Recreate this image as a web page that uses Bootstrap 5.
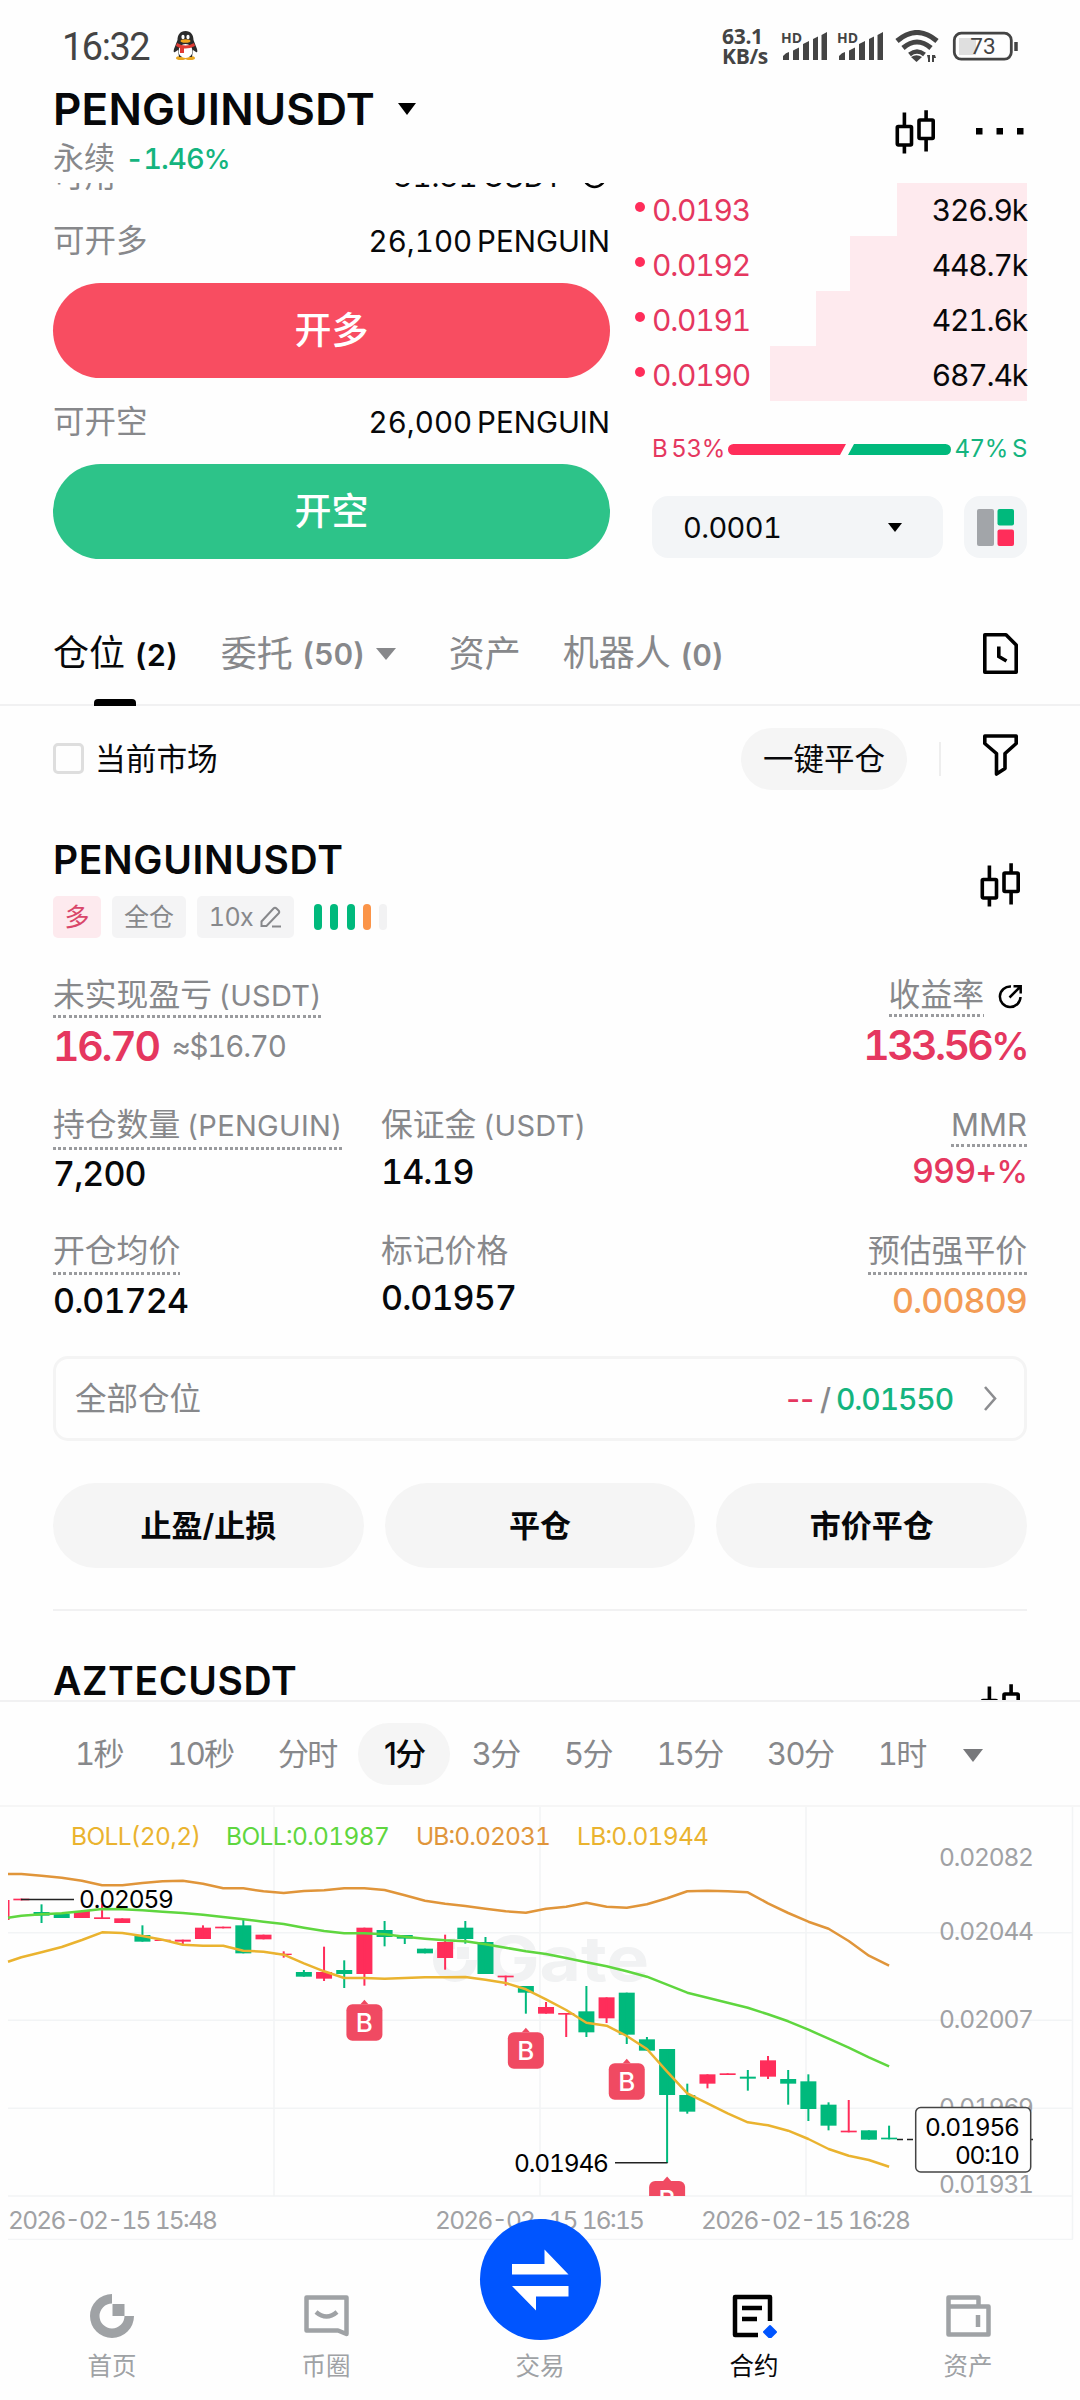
<!DOCTYPE html>
<html lang="zh-CN">
<head>
<meta charset="utf-8">
<meta name="viewport" content="width=device-width, initial-scale=1">
<title>PENGUINUSDT 永续</title>
<link rel="stylesheet" href="https://cdn.jsdelivr.net/npm/bootstrap@5.3.0/dist/css/bootstrap.min.css">
<style>
:root{--up:#00b97c;--down:#ff2d5a;--ink:#07080a;--dim:#87888b;--soft:#f5f5f5;--rule:#f1f1f2}
html,body{background:#fefefe}
body{width:1080px;height:2400px;overflow:hidden;font-family:Inter,"Noto Sans CJK SC",sans-serif;font-variant-numeric:tabular-nums;color:var(--ink);font-size:31.5px;line-height:40px}
svg{display:block;flex:none}
.ink{color:var(--ink)!important}.dim{color:var(--dim)}.grn{color:#14b47e}.redtx{color:#e5375f}.orgtx{color:#f39c55}
.pagepad{padding-left:53px;padding-right:53px}
.statusbar{height:84px;padding:7px 60px 0 62px;color:#444;font-family:Roboto,sans-serif}
.clock{font-size:38px;letter-spacing:-1.5px;margin-right:24px;padding-top:2px}
.netspeed{font:700 21px/20px "Open Sans",sans-serif;width:58px;letter-spacing:-.3px;padding-top:1px}
.tophead{height:99px;padding-right:53px}
.pairname{font-size:44px;font-weight:600;line-height:50px;letter-spacing:.2px}
.subline{font-size:31px;line-height:40px;margin-top:4px}
.subline .grn{font-size:29px;letter-spacing:-.9px;margin-left:2px}
.tradezone{height:406px;overflow:hidden}
.ticket{width:557px}
.avail{height:42px;margin-top:-28px}
.lineitem{height:42px}
.numtx{font-size:29.5px;letter-spacing:0;word-spacing:-3px}
.bigbtn{height:95px;border-radius:48px;color:#fff;font-size:37px;font-weight:500;width:100%;border:0}
.longbtn{background:#f84d61}.shortbtn{background:#2dc389}
.depth{width:392px}
.depthrow{height:55px;padding-top:3px;font-size:30px;letter-spacing:-1.2px}
.depthrow:first-child{margin-top:-2px}
.depthrow .fillbar{right:0;top:0;height:100%;background:#feeaee}
.depthrow .pt{width:10px;height:10px;border-radius:50%;background:var(--down);margin-right:7px;margin-top:-6px}
.sharebar{font-size:24px;height:30px;margin-top:33px;padding-left:17px;word-spacing:-2px;letter-spacing:-.4px}
.pickbox{height:62px;border-radius:16px;background:#f3f5f7}
.tabstrip{height:117px;border-bottom:2px solid var(--rule);padding-top:14px;font-size:36px;line-height:50px}
.cnt{font-size:30.5px;font-weight:600;letter-spacing:-.2px}
.tabstrip .on::after{content:"";position:absolute;left:40.5px;bottom:-26px;width:42px;height:7px;border-radius:4px 4px 0 0;background:#000}
.filterbar{height:105px}
.tick{width:31px;height:31px;border:3px solid #dedede;border-radius:5px}
.pill{background:var(--soft);border-radius:60px;border:0;color:var(--ink)}
.coin{font-size:39px;font-weight:600;line-height:46px;letter-spacing:.65px}
.tagbox{height:42px;border-radius:5px;background:#f4f4f5;color:var(--dim);font-size:25px}
.lv i{display:block;width:8px;height:26px;border-radius:4px;background:var(--up)}
.dotted{background:repeating-linear-gradient(90deg,#9a9b9e 0 3px,transparent 3px 5.2px) left bottom/100% 3px no-repeat;padding-bottom:2px}
.lab{font-size:31.8px;line-height:40px;color:var(--dim);word-spacing:-2px}
.lt{font-size:29px;letter-spacing:.3px}
.val{font-size:34px;line-height:40px;font-weight:500;letter-spacing:-.9px}
.bigval{font-size:41px;line-height:46px;font-weight:600;letter-spacing:-2.3px}
.pct{font-size:.93em}
.stopbox{height:85px;border:3px solid #f4f4f4;border-radius:15px;padding:0 24px 0 19px}
.stopnum{font-size:30px;word-spacing:-1px;letter-spacing:-1.1px}
.actbtn{height:85px;font-size:31px;font-weight:600}
.frames{height:107px;border-top:2px solid var(--rule);border-bottom:2px solid #f6f6f6;padding-left:75px;color:var(--dim);font-size:31px;letter-spacing:-1.7px}
.frames .pill{width:92px;height:62px;margin:0 -23px;letter-spacing:inherit}
.chartbox{height:433px}
.navbar-foot{height:160px}
.navcell{width:214px;font-size:24.5px;line-height:34px;color:#9fa2a5;padding-bottom:17px}
.navcell svg{margin-bottom:11px}
.swap{left:480px;top:-21px;width:121px;height:121px;border-radius:50%;background:#0055ff;z-index:3}
</style>
</head>
<body>
<svg width="0" height="0" class="position-absolute"><defs>
<symbol id="kline" viewBox="0 0 40 44"><g fill="none" stroke="#000" stroke-width="3.6"><rect x="2.3" y="16.500" width="14.200" height="18.500" rx="1"/><rect x="24" y="10" width="14.200" height="18.500" rx="1"/><path d="M9.400 2.500V16M9.400 35V43.500M31.100 .2V10M31.100 28V41.500"/></g></symbol>
<symbol id="bars" viewBox="0 0 46 29"><path d="M0 28V24Q3 20.500 6 20V28ZM10 28V18.500L16 15.500V28ZM20 28V12L26 9V28ZM30 28V7L35 4.500V28ZM38.500 28V3L44 0V28Z" fill="#444"/></symbol>
</defs></svg>

<header class="statusbar d-flex align-items-center">
  <span class="clock">16:32</span>
  <svg width="25" height="29" viewBox="0 0 25 29"><ellipse cx="8" cy="27" rx="5" ry="2" fill="#e8a51d"/><ellipse cx="17" cy="27" rx="5" ry="2" fill="#e8a51d"/><path d="M12.500 0C7 0 4.500 4 4.500 9L1 18q-1 4 1 3l3-2 1 7h13l1-7 3 2q2 1 1-3L20.500 9C20.500 4 18 0 12.500 0Z" fill="#2b2b2b"/><ellipse cx="12.500" cy="20" rx="7" ry="7" fill="#fff"/><ellipse cx="10" cy="6" rx="1.600" ry="2.300" fill="#fff"/><ellipse cx="15" cy="6" rx="1.600" ry="2.300" fill="#fff"/><ellipse cx="12.500" cy="10" rx="5" ry="1.800" fill="#f2a31c"/><path d="M4 12q8.500 5 17 0l1 3q-6 3-11 2.500V22H7v-5l-4-2Z" fill="#e03b33"/></svg>
  <div class="ms-auto d-flex align-items-center">
    <div class="netspeed text-start">63.1<br>KB/s</div>
    <svg width="172" height="32" viewBox="780 30 172 32">
      <g font-family="Open Sans, sans-serif" font-weight="700" font-size="14" fill="#444"><text x="781" y="42.500" textLength="21">HD</text><text x="837" y="42.500" textLength="21">HD</text></g>
      <use href="#bars" x="783" y="32" width="46" height="29"/><use href="#bars" x="839" y="32" width="46" height="29"/>
      <g fill="none" stroke="#444" stroke-width="5"><path d="M897 41Q917 24 937 41"/><path d="M903 48Q917 36 931 48"/><path d="M909.500 54.500Q917 48.500 924.500 54.500" stroke-width="4.500"/></g><path d="M911 57Q916.500 53.500 922 57L916.500 62Z" fill="#444"/><path d="M927 55h3v7h-2v-3ZM932 55h3l1 3h-2v4h-2Z" fill="#444"/>
    </svg>
    <svg width="68" height="30" viewBox="952 30 68 30"><rect x="959" y="37" width="17" height="17" fill="#dfdfdf"/><rect x="954.300" y="32.200" width="57" height="26" rx="7" fill="none" stroke="#444" stroke-width="2.800"/><path d="M1016 41v9" stroke="#444" stroke-width="3.500"/><text x="983" y="53" text-anchor="middle" font-family="Roboto, sans-serif" font-size="22.500" fill="#444">73</text></svg>
  </div>
</header>

<section class="tophead pagepad d-flex">
  <div>
    <div class="d-flex align-items-center"><span class="pairname">PENGUINUSDT</span><svg style="margin-left:22px" width="20" height="12" viewBox="0 0 20 12"><path d="M1 0H19L10 12Z"/></svg></div>
    <div class="subline"><span class="dim">永续</span> <span class="grn fw-medium">-1.46<span class="pct">%</span></span></div>
  </div>
  <div class="ms-auto d-flex align-items-center" style="margin-top:-4px">
    <svg width="40" height="44" style="margin-right:41px"><use href="#kline"/></svg>
    <svg width="48" height="7" style="margin-right:3px"><path d="M0 0h6.500v6.500H0zM20.500 0h6.500v6.500h-6.500zM41 0h6.500v6.500h-6.500z"/></svg>
  </div>
</section>

<section class="tradezone pagepad d-flex justify-content-between">
  <div class="ticket">
    <div class="avail d-flex justify-content-between align-items-center"><span class="dim">可用</span><span class="numtx d-flex align-items-center">31.31 USDT<svg style="margin:0 3px 0 19px" width="25" height="25"><circle cx="12.500" cy="12.500" r="10.500" fill="none" stroke="#000" stroke-width="2.500"/></svg></span></div>
    <div class="lineitem d-flex justify-content-between align-items-center" style="margin-top:23px"><span class="dim">可开多</span><span class="numtx">26,100 PENGUIN</span></div>
    <button class="bigbtn longbtn" style="margin-top:21px">开多</button>
    <div class="lineitem d-flex justify-content-between align-items-center" style="margin-top:23px"><span class="dim">可开空</span><span class="numtx">26,000 PENGUIN</span></div>
    <button class="bigbtn shortbtn" style="margin-top:21px">开空</button>
  </div>
  <div class="depth">
    <div>
      <div class="depthrow position-relative d-flex align-items-center"><span class="fillbar position-absolute" style="width:130px"></span><span class="pt"></span><span class="redtx">0.0193</span><span class="ms-auto position-relative">326.9k</span></div>
      <div class="depthrow position-relative d-flex align-items-center"><span class="fillbar position-absolute" style="width:177px"></span><span class="pt"></span><span class="redtx">0.0192</span><span class="ms-auto position-relative">448.7k</span></div>
      <div class="depthrow position-relative d-flex align-items-center"><span class="fillbar position-absolute" style="width:211px"></span><span class="pt"></span><span class="redtx">0.0191</span><span class="ms-auto position-relative">421.6k</span></div>
      <div class="depthrow position-relative d-flex align-items-center"><span class="fillbar position-absolute" style="width:257px"></span><span class="pt"></span><span class="redtx">0.0190</span><span class="ms-auto position-relative">687.4k</span></div>
    </div>
    <div class="sharebar d-flex align-items-center justify-content-between"><span class="redtx">B 53%</span><svg width="223" height="11"><path d="M5.500 0H118L112 11H5.500A5.500 5.500 0 0 1 5.500 0Z" fill="#ff2d5a"/><path d="M126 0H217.500a5.500 5.500 0 0 1 0 11H120Z" fill="#00b97c"/></svg><span class="grn">47% S</span></div>
    <div class="d-flex justify-content-between" style="padding-left:17px;margin-top:32px">
      <div class="pickbox d-flex align-items-center justify-content-between" style="width:291px;padding:1px 41px 0 31px;font-size:29px;letter-spacing:-.6px"><span>0.0001</span><svg width="14" height="9"><path d="M0 0H14L7 9Z"/></svg></div>
      <div class="pickbox d-flex align-items-center justify-content-center" style="width:63px"><svg width="37" height="37"><rect width="17" height="37" rx="2" fill="#a2a5a9"/><rect x="20.500" width="16.500" height="16.500" rx="2" fill="#00b97c"/><rect x="20.500" y="20.500" width="16.500" height="16.500" rx="2" fill="#ff2d5a"/></svg></div>
    </div>
  </div>
</section>

<nav class="tabstrip pagepad d-flex align-items-center">
  <span class="on position-relative">仓位 <span class="cnt">(2)</span></span>
  <span class="dim d-flex align-items-center" style="margin-left:43px">委托&nbsp;<span class="cnt">(50)</span><svg style="margin-left:11px" width="20" height="12"><path d="M0 0H20L10 12Z" fill="#87888b"/></svg></span>
  <span class="dim" style="margin-left:53px">资产</span>
  <span class="dim" style="margin-left:42px">机器人 <span class="cnt">(0)</span></span>
  <svg class="ms-auto" style="margin-right:9px" width="35" height="41" viewBox="0 0 35 41"><path d="M1.800 1.800H23L33.200 12V39.200H1.800Z" fill="none" stroke="#000" stroke-width="3.600" stroke-linejoin="round"/><path d="M15.800 13.500V23.500L23.500 28" fill="none" stroke="#000" stroke-width="3.600"/></svg>
</nav>

<div class="filterbar pagepad d-flex align-items-center">
  <span class="tick"></span><span style="margin-left:11px;font-size:30.700px">当前市场</span>
  <button class="pill ms-auto" style="width:166px;height:62px;font-size:30.500px;padding:0">一键平仓</button>
  <span style="width:2px;height:34px;background:#eee;margin:0 42px 0 32px"></span>
  <svg style="margin:-8px 9px 0 0" width="35" height="42" viewBox="0 0 35 42"><path d="M1.800 2H33.200V9.500L22 19.500V34.500L13.500 40V19.500L1.800 9.500Z" fill="none" stroke="#000" stroke-width="3.600" stroke-linejoin="round"/></svg>
</div>

<main class="pagepad" style="height:889px;overflow:hidden;padding-top:26px">
  <div class="d-flex justify-content-between">
    <div>
      <div class="coin">PENGUINUSDT</div>
      <div class="d-flex align-items-center" style="margin-top:13px">
        <span class="tagbox d-flex align-items-center justify-content-center" style="width:48px;background:#fdeaee;color:#d9466a">多</span>
        <span class="tagbox d-flex align-items-center justify-content-center" style="width:74px;margin-left:11px">全仓</span>
        <span class="tagbox d-flex align-items-center justify-content-center" style="width:97px;margin-left:11px;letter-spacing:-.6px">10x<svg style="margin-left:7px" width="22" height="22" viewBox="0 0 22 22"><path d="M1.500 20V15.500L13.500 2.500Q15 1 16.500 2.500L18.500 4.500Q20 6 18.500 7.500L6.500 20ZM12 20.500H21" fill="none" stroke="#87888b" stroke-width="2"/></svg></span>
        <span class="lv d-flex" style="gap:8.300px;margin-left:20px"><i></i><i></i><i></i><i style="background:#fb9448"></i><i style="background:#f2f2f3"></i></span>
      </div>
    </div>
    <svg style="margin:26px 7px 0 0" width="40" height="44"><use href="#kline"/></svg>
  </div>

  <div class="d-flex justify-content-between" style="margin-top:37px">
    <div><span class="lab dotted d-inline-block">未实现盈亏 <span class="lt">(USDT)</span></span>
      <div class="d-flex align-items-center" style="margin-top:5px"><span class="bigval redtx">16.70</span><span class="dim" style="font-size:29.500px;margin-left:13px;letter-spacing:-1.200px">≈$16.70</span></div></div>
    <div class="text-end"><div class="d-flex justify-content-end align-items-center"><span class="lab dotted">收益率</span><svg style="margin:0 4px 0 14px" width="25" height="25" viewBox="0 0 25 25"><path d="M13 2.500A10.300 10.300 0 1 0 22.500 13M11.500 13.500 22 3M15.500 2.200H22.700V9.500" fill="none" stroke="#000" stroke-width="2.500"/></svg></div>
      <div class="bigval redtx" style="margin-top:5px;letter-spacing:-2.600px">133.56<span class="pct">%</span></div></div>
  </div>

  <div class="d-flex" style="margin-top:36px">
    <div style="width:328px"><span class="lab dotted d-inline-block" style="padding-bottom:4px">持仓数量 <span class="lt">(PENGUIN)</span></span><div class="val" style="margin-top:4px">7,200</div></div>
    <div><div class="lab">保证金 <span class="lt">(USDT)</span></div><div class="val" style="margin-top:6px">14.19</div></div>
    <div class="ms-auto text-end"><span class="lab dotted d-inline-block" style="font-size:31px">MMR</span><div class="val redtx" style="margin-top:4px">999+<span class="pct">%</span></div></div>
  </div>
  <div class="d-flex" style="margin-top:37px">
    <div style="width:328px"><span class="lab dotted d-inline-block" style="padding-bottom:4px">开仓均价</span><div class="val" style="margin-top:6px">0.01724</div></div>
    <div><div class="lab">标记价格</div><div class="val" style="margin-top:7px">0.01957</div></div>
    <div class="ms-auto text-end"><span class="lab dotted d-inline-block" style="padding-bottom:4px">预估强平价</span><div class="val orgtx" style="margin-top:6px">0.00809</div></div>
  </div>

  <div class="stopbox d-flex align-items-center" style="margin-top:35px"><span class="dim">全部仓位</span><span class="stopnum ms-auto fw-medium"><span class="redtx" style="font-variant-numeric:normal;letter-spacing:0">--</span> <span class="dim">/</span> <span class="grn">0.01550</span></span><svg style="margin-left:30px;margin-right:3px" width="14" height="25"><path d="M2 1 12 12.500 2 24" fill="none" stroke="#8c8d90" stroke-width="2.600"/></svg></div>
  <div class="d-flex" style="gap:21px;margin-top:42px"><button class="pill actbtn flex-fill w-100">止盈/止损</button><button class="pill actbtn flex-fill w-100">平仓</button><button class="pill actbtn flex-fill w-100">市价平仓</button></div>
  <div style="height:2px;background:var(--rule);margin-top:41px"></div>
  <div class="d-flex justify-content-between" style="margin-top:47px"><div class="coin">AZTECUSDT</div><svg style="margin:26px 7px 0 0" width="40" height="44"><use href="#kline"/></svg></div>
</main>

<div class="frames d-flex align-items-center" style="gap:44.600px">
  <span>1秒</span><span>10秒</span><span>分时</span><button class="pill p-0 fw-medium">1分</button><span>3分</span><span>5分</span><span>15分</span><span>30分</span><span>1时</span><svg style="margin-left:-7px;margin-top:4px" width="20" height="13"><path d="M0 0H20L10 13Z" fill="#77787b"/></svg>
</div>

<svg class="chartbox" id="chart" width="1080" height="433" viewBox="0 17 1080 433" font-family="Inter, sans-serif" font-size="24.500">
  <g stroke="#f2f4f5" stroke-width="1.500"><path d="M8 142.700H1073M8 230.300H1073M8 318.300H1073M8 406H1073M8 449.500H1073M274 17V406M540 17V406M806 17V406M1072.500 17V449"/></g>
  <g fill="#f1f2f3"><path d="M455 148a22 22 0 1 0 22 22h-11a11 11 0 1 1-11-11Z"/><path d="M457 157h12v12h-12z"/><text x="486" y="191" font-size="62" font-weight="700" textLength="163" lengthAdjust="spacingAndGlyphs">Gate</text></g>
  <g id="candles"></g>
  <g id="bands" fill="none" stroke-width="2.500" stroke-linejoin="round"></g>
  <g stroke="#222" stroke-width="1.400"><path d="M21 109.500H74M615 372.700H667.500"/><path d="M897 349.500H915M1029 349.500h4" stroke-dasharray="6 4"/></g>
  <g fill="#000"><text x="79" y="118" textLength="95">0.02059</text><text x="514" y="382" textLength="95">0.01946</text></g>
  <text x="71" y="54.500" fill="#eab32f" textLength="130">BOLL(20,2)</text><text x="226" y="54.500" fill="#5fd63f" textLength="164">BOLL:0.01987</text><text x="416" y="54.500" fill="#e0953a" textLength="135">UB:0.02031</text><text x="577" y="54.500" fill="#eab32f" textLength="132">LB:0.01944</text>
  <g fill="#a0a1a4"><text x="939" y="75.500" textLength="95">0.02082</text><text x="939" y="149.500" textLength="95">0.02044</text><text x="939" y="237.500" textLength="95">0.02007</text><text x="939" y="325.500" textLength="95">0.01969</text><text x="939" y="402.500" textLength="95">0.01931</text>
  <text x="8" y="438.500" textLength="210">2026-02-15 15:48</text><text x="435" y="438.500" textLength="210">2026-02-15 16:15</text><text x="701" y="438.500" textLength="210">2026-02-15 16:28</text></g>
  <rect x="915.700" y="317.500" width="115" height="64.500" rx="5" fill="#fefefe" stroke="#444" stroke-width="1.500"/>
  <g fill="#000"><text x="925" y="345.700" textLength="95">0.01956</text><text x="955" y="374.300" textLength="65">00:10</text></g>
  <clipPath id="plot"><rect x="0" y="17" width="1080" height="389"/></clipPath>
  <g id="marks" clip-path="url(#plot)" font-size="26" font-weight="500" text-anchor="middle"></g>
</svg>

<footer class="navbar-foot position-relative d-flex justify-content-center">
  <div class="swap position-absolute d-flex align-items-center justify-content-center"><svg width="57" height="62" viewBox="0 0 57 62"><path d="M0 15H32.500V.5L56.500 25.500H0ZM56.500 37H0L24 61.500V47.500H56.500Z" fill="#fff"/></svg></div>
  <div class="navcell d-flex flex-column align-items-center justify-content-end"><svg width="45" height="44" viewBox="0 0 45 44"><path d="M22 0A22 22 0 1 0 44 22H34.500A12.500 12.500 0 1 1 22 9.500Z" fill="#9fa2a5"/><path d="M22.500 10H34.500V22H22.500Z" fill="#9fa2a5"/></svg>首页</div>
  <div class="navcell d-flex flex-column align-items-center justify-content-end"><svg width="45" height="44" viewBox="0 0 45 44"><path d="M2.500 3.500H42.500V40L34 36.500H2.500Z" fill="none" stroke="#9fa2a5" stroke-width="4.500" stroke-linejoin="round"/><path d="M12 18Q22.500 27 33 18" fill="none" stroke="#9fa2a5" stroke-width="4.500"/></svg>币圈</div>
  <div class="navcell d-flex flex-column align-items-center justify-content-end">交易</div>
  <div class="navcell d-flex flex-column align-items-center justify-content-end ink"><svg width="45" height="44" viewBox="0 0 45 44"><path d="M38 27V3H3V41H26" fill="none" stroke="#000" stroke-width="4.500" stroke-linejoin="round"/><path d="M10 14H30M10 25H25" stroke="#000" stroke-width="4.500"/><path d="M38 32l6 6-6 6-6-6Z" fill="#0055ff" stroke="#0055ff" stroke-width="2" stroke-linejoin="round"/></svg>合约</div>
  <div class="navcell d-flex flex-column align-items-center justify-content-end"><svg width="45" height="44" viewBox="0 0 45 44"><path d="M2.500 12.500V3.500H32.500V12.500M2.500 12.500H42.500V40.500H2.500Z" fill="none" stroke="#9fa2a5" stroke-width="4.500" stroke-linejoin="round"/><path d="M32 21V33" stroke="#9fa2a5" stroke-width="4.500"/></svg>资产</div>
</footer>

<script src="https://cdn.jsdelivr.net/npm/bootstrap@5.3.0/dist/js/bootstrap.bundle.min.js"></script>
<script>
// One-minute candles: colour, body top, body bottom, high, low (in thirds of a pixel)
const candles=[
['r',326,331,326,331],['g',366,377,343,399],['g',371,384,371,384],['r',363,384,363,384],['r',382,387,340,387],['r',385,399,385,399],
['g',435,455,406,455],['r',449,453,449,453],['r',449,455,449,462],['r',413,447,406,447],['r',410,415,410,415],['g',406,490,386,490],
['r',434,448,434,448],['r',491,495,484,503],['g',546,560,540,560],['r',546,566,470,573],['g',540,552,511,594],['r',413,552,413,587],
['g',420,441,393,469],['g',435,446,435,462],['g',476,490,476,490],['r',456,504,434,539],['g',413,447,393,461],['g',456,552,441,552],
['r',557,562,557,587],['g',588,608,588,671],['r',651,671,636,671],['r',669,674,669,741],['g',664,727,588,741],['r',622,685,622,699],
['g',608,734,608,762],['g',748,782,741,782],['g',777,915,777,1119],['g',915,965,881,971],['r',853,881,853,895],['r',850,855,850,855],
['g',860,866,840,902],['r',811,860,798,867],['g',867,881,840,944],['g',874,957,853,993],['g',944,1007,937,1021],['r',1022,1027,930,1027],
['g',1021,1049,1021,1049],['g',1043,1048,1007,1048]];
const bands={
'#e0953a':[252,252,257,263,272,286,286,279,274,272,281,295,295,304,309,303,301,295,295,300,316,332,341,348,356,364,368,356,350,338,350,353,343,325,304,302,304,307,340,369,395,416,453,497,527],
'#5fd63f':[383,377,373,370,364,357,358,361,365,369,374,381,388,395,402,413,423,430,430,433,440,446,451,454,463,473,484,492,504,517,529,544,560,584,608,623,638,653,673,694,719,746,773,802,829],
'#eab32f':[515,502,487,471,450,427,429,438,449,464,467,467,482,485,494,520,544,564,564,566,564,562,562,561,569,579,598,628,660,698,707,738,777,845,910,940,970,997,1006,1022,1047,1077,1097,1110,1130]};
const cx=i=>i<0?8:21.35+i*20.18, tone={r:'#ff2d5a',g:'#00b97c'};
document.getElementById('candles').innerHTML='<rect x="8" y="110" width="1.500" height="20" fill="#ff2d5a"/>'+candles.map(([c,t,b,h,l],i)=>
 `<rect x="${cx(i)-8}" y="${t/3}" width="16" height="${(b-t)/3}" fill="${tone[c]}"/><rect x="${cx(i)-1}" y="${h/3}" width="2" height="${(l-h)/3}" fill="${tone[c]}"/>`).join('');
document.getElementById('bands').innerHTML=Object.entries(bands).map(([c,p])=>
 `<polyline stroke="${c}" points="${p.map((y,k)=>cx(k-1).toFixed(1)+','+(y/3).toFixed(1)).join(' ')}"/>`).join('');
document.getElementById('marks').innerHTML=[[17,643],[25,727],[30,820],[32,1173]].map(([i,y])=>{const x=cx(i),t=y/3;
 return `<rect x="${x-18}" y="${t}" width="36" height="36.500" rx="6" fill="#f04a62"/><path d="M${x-4} ${t}L${x} ${t-4.5}L${x+4} ${t}Z" fill="#f04a62"/><text x="${x}" y="${t+28}" fill="#fff">B</text>`}).join('');
</script>
</body>
</html>
